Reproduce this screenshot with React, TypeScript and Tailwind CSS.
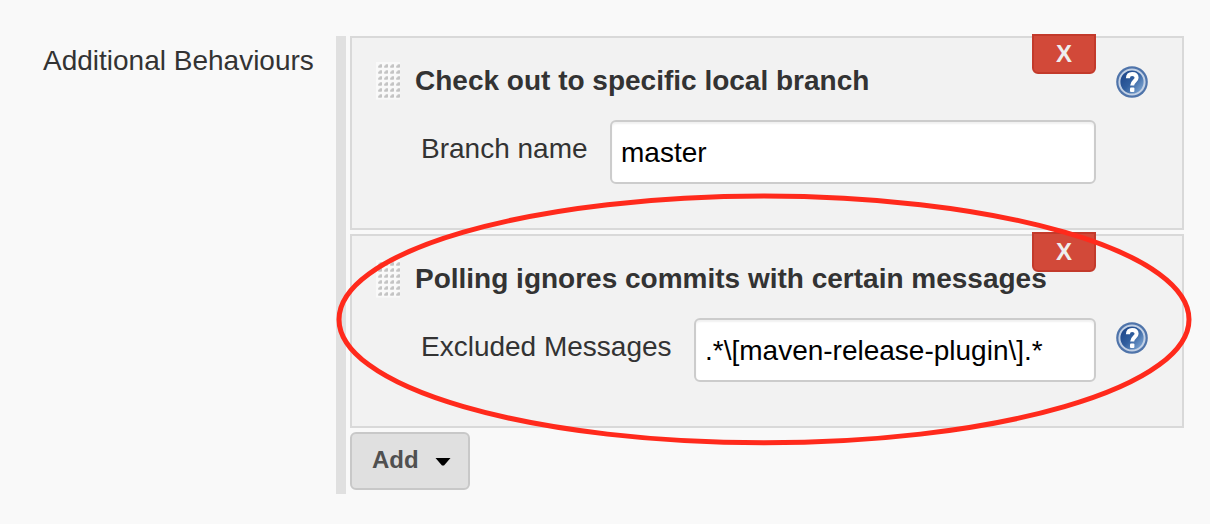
import React from "react";

function Grip() {
  return (
    <svg width="24" height="38" viewBox="0 0 24 38" className="block shrink-0">
      <defs>
        <pattern id="grip" width="6" height="6" patternUnits="userSpaceOnUse">
          <rect width="6" height="6" fill="#f9f9f9" />
          <path d="M2 6V4L4 2H6V6Z" fill="#e0e0e0" />
          <path d="M2.6 5.4V4.2L4.3 2.5H6V4.4L5 5.4Z" fill="#c4c4c4" />
        </pattern>
      </defs>
      <rect width="24" height="37.5" fill="url(#grip)" />
    </svg>
  );
}

function Help() {
  return (
    <svg width="32" height="32" viewBox="0 0 32 32" className="block">
      <defs>
        <linearGradient id="help" x1="0.1" y1="0.2" x2="0.9" y2="0.9">
          <stop offset="0" stopColor="#20498c" />
          <stop offset="0.45" stopColor="#315f9f" />
          <stop offset="1" stopColor="#82a9d5" />
        </linearGradient>
      </defs>
      <circle cx="16" cy="16" r="15.8" fill="#4f74aa" />
      <circle cx="16" cy="16" r="12.6" fill="url(#help)" stroke="#c3d1e5" strokeWidth="2" />
      <path d="M11.9 12.2C12 9.2 13.6 7.9 16.1 7.9C18.9 7.9 20.6 9.3 20.6 11.7C20.6 15 16.2 15 16.2 19.6" fill="none" stroke="#fff" strokeWidth="4" />
      <rect x="14" y="21.6" width="4.4" height="4.4" rx="1" fill="#fff" />
    </svg>
  );
}

type PanelProps = {
  title: string;
  label: string;
  value: string;
  inputClass: string;
  helpClass: string;
};

function Behaviour({ title, label, value, inputClass, helpClass }: PanelProps) {
  return (
    <section className="relative flex h-[194px] w-[834px] border-2 border-[#d9d9d9] bg-[#f2f2f2] pl-6">
      <div className="pt-6">
        <Grip />
      </div>
      <div className="ml-[15px] w-[681px] pt-[27px]">
        <h2 className="h-8 text-[28px] leading-8 font-bold whitespace-nowrap text-[#333]">{title}</h2>
        <div className="mt-[23px] flex h-16 pl-1.5">
          <label className="pt-[13px] text-[28px] leading-8 whitespace-nowrap text-[#333]">{label}</label>
          <div className={`ml-auto flex h-16 items-center rounded-md border-2 border-[#ccc] bg-white pt-0.5 pl-[9px] text-[28px] whitespace-nowrap text-black shadow-[inset_0_2px_2px_rgba(0,0,0,0.06)] ${inputClass}`}>
            {value}
          </div>
        </div>
      </div>
      <div className={`ml-5 ${helpClass}`}>
        <Help />
      </div>
      <button className="absolute top-[-4px] right-[86px] flex h-10 w-16 items-center justify-center rounded-b-md border-2 border-[#c33a2b] bg-[#d24939] text-[24px] leading-none font-bold text-[#eee]">
        X
      </button>
    </section>
  );
}

export default function App() {
  return (
    <main className="relative flex h-[524px] w-[1210px] overflow-hidden bg-[#f9f9f9] pt-9 font-['Liberation_Sans',Arial,sans-serif]">
      <div className="w-[336px] pt-[9px] pl-[43px] text-[28px] leading-8 whitespace-nowrap text-[#333]">
        Additional Behaviours
      </div>
      <div className="h-[458px] w-[10px] bg-[#e0e0e0]" />
      <div className="ml-1 flex flex-col gap-1">
        <Behaviour
          title="Check out to specific local branch"
          label="Branch name"
          value="master"
          inputClass="w-[486px]"
          helpClass="pt-7"
        />
        <Behaviour
          title="Polling ignores commits with certain messages"
          label="Excluded Messages"
          value=".*\[maven-release-plugin\].*"
          inputClass="w-[402px]"
          helpClass="pt-[86px]"
        />
        <button className="flex h-[58px] w-[120px] items-center rounded-md border-2 border-[#c8c8c8] bg-[#e0e0e0] pl-5 text-[24px] leading-none font-bold text-[#505050]">
          <span className="-mt-0.5">Add</span>
          <svg width="16" height="8" viewBox="0 0 16 8" className="mt-0.5 ml-4 block">
            <path d="M0.5 0H15.5L9 7.5H7Z" fill="#000" />
          </svg>
        </button>
      </div>
      <svg width="1210" height="524" viewBox="0 0 1210 524" className="pointer-events-none absolute inset-0">
        <ellipse cx="764" cy="319.4" rx="425" ry="123.4" fill="none" stroke="#ff2a1c" strokeWidth="5" />
      </svg>
    </main>
  );
}
